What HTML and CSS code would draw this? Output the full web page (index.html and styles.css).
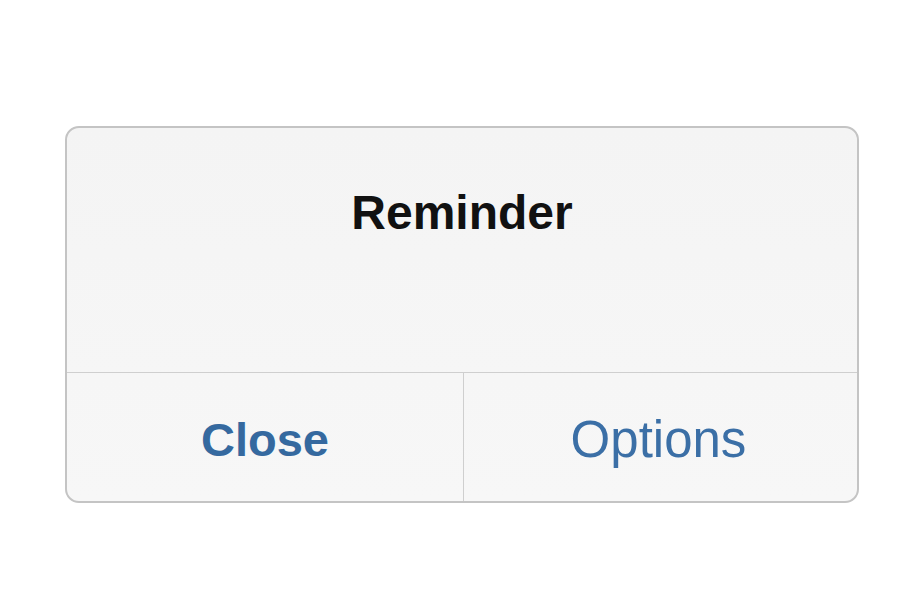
FILE: index.html
```html
<!DOCTYPE html>
<html>
<head>
<meta charset="utf-8">
<link rel="stylesheet" href="styles.css">
</head>
<body>
<div class="page">
  <div class="dialog">
    <div class="dialog-body">
      <h1 class="title">Reminder</h1>
    </div>
    <div class="actions">
      <div class="btn btn-bold">Close</div>
      <div class="btn btn-regular">Options</div>
    </div>
  </div>
</div>
</body>
</html>
```
FILE: styles.css
```css
html, body {
  margin: 0;
  padding: 0;
  background: #ffffff;
}
.page {
  width: 920px;
  height: 608px;
  box-sizing: border-box;
  padding: 126px 0 0 65px;
  font-family: "Liberation Sans", Arial, sans-serif;
}
.dialog {
  width: 794px;
  height: 377px;
  box-sizing: border-box;
  border: 2px solid #c4c4c4;
  border-radius: 14px;
  background: linear-gradient(#f4f4f4, #f7f7f7);
  display: flex;
  flex-direction: column;
  overflow: hidden;
}
.dialog-body {
  height: 245px;
  box-sizing: border-box;
  border-bottom: 1px solid #cfcfcf;
  display: flex;
  justify-content: center;
  padding-top: 57px;
}
.title {
  margin: 0;
  font-size: 48px;
  line-height: 56px;
  font-weight: bold;
  color: #111111;
}
.actions {
  flex: 1;
  display: flex;
}
.btn {
  flex: 1;
  display: flex;
  align-items: center;
  justify-content: center;
  color: #3b6fa6;
  padding-top: 4px;
}
.btn + .btn {
  border-left: 1px solid #cfcfcf;
}
.btn-bold {
  font-size: 47px;
  font-weight: bold;
  color: #35699f;
  width: 396px;
  flex: none;
}
.btn-regular {
  font-size: 51px;
  padding-right: 4px;
}
```
